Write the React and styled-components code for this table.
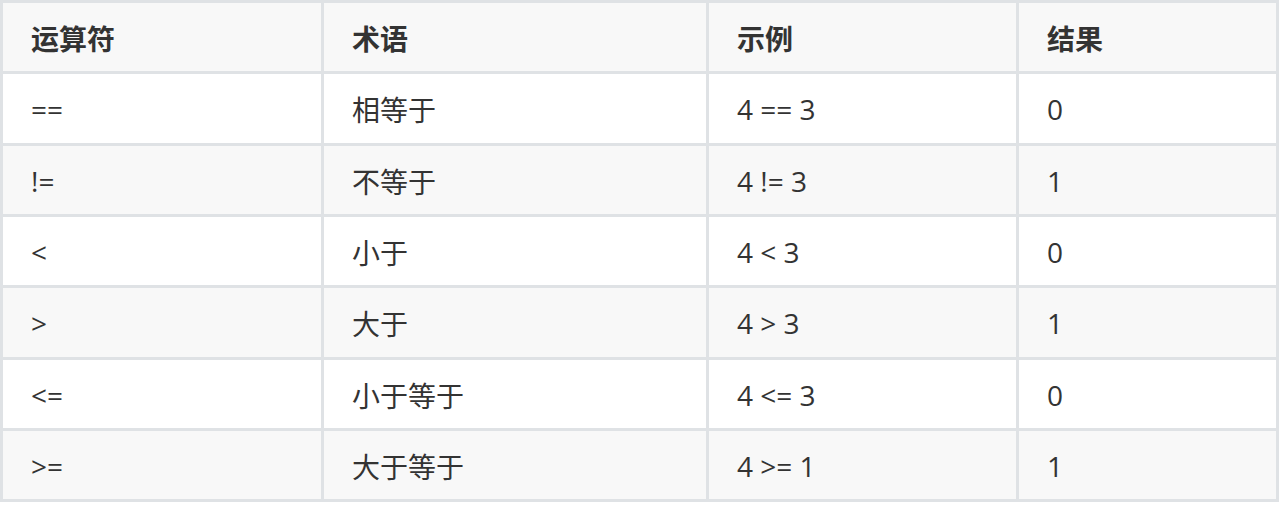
import React from "react";
import styled, { createGlobalStyle } from "styled-components";

const Global = createGlobalStyle`
  html, body { margin: 0; padding: 0; background: #ffffff; overflow: hidden; }
  * { box-sizing: border-box; }
`;

const Table = styled.table`
  width: 1279px;
  table-layout: fixed;
  border-collapse: separate;
  border-spacing: 0;
  border-left: 3px solid #dfe2e5;
  border-top: 3px solid #dfe2e5;
  font-family: "Open Sans", "Noto Sans CJK SC", sans-serif;
  font-size: 28px;
  color: #333333;
`;

const Row = styled.tr`
  background: ${(p) => (p.$shaded ? "#f8f8f8" : "#ffffff")};
`;

const HeadCell = styled.th`
  width: ${(p) => p.$w}px;
  height: 71.33px;
  padding: 2px 0 0 28px;
  text-align: left;
  vertical-align: middle;
  font-weight: 700;
  border-right: 3px solid #dfe2e5;
  border-bottom: 3px solid #dfe2e5;
`;

const Cell = styled.td`
  height: 71.33px;
  padding: 2px 0 0 28px;
  text-align: left;
  vertical-align: middle;
  font-weight: 400;
  border-right: 3px solid #dfe2e5;
  border-bottom: 3px solid #dfe2e5;
`;

const headers = [
  ["运算符", 321],
  ["术语", 385],
  ["示例", 310],
  ["结果", 260],
];

const rows = [
  ["==", "相等于", "4 == 3", "0"],
  ["!=", "不等于", "4 != 3", "1"],
  ["<", "小于", "4 < 3", "0"],
  [">", "大于", "4 > 3", "1"],
  ["<=", "小于等于", "4 <= 3", "0"],
  [">=", "大于等于", "4 >= 1", "1"],
];

export default function App() {
  return (
    <>
      <Global />
      <Table>
        <thead>
          <Row $shaded>
            {headers.map(([t, w]) => (
              <HeadCell key={t} $w={w}>{t}</HeadCell>
            ))}
          </Row>
        </thead>
        <tbody>
          {rows.map((r, i) => (
            <Row key={i} $shaded={i % 2 === 1}>
              {r.map((c, j) => (
                <Cell key={j}>{c}</Cell>
              ))}
            </Row>
          ))}
        </tbody>
      </Table>
    </>
  );
}
